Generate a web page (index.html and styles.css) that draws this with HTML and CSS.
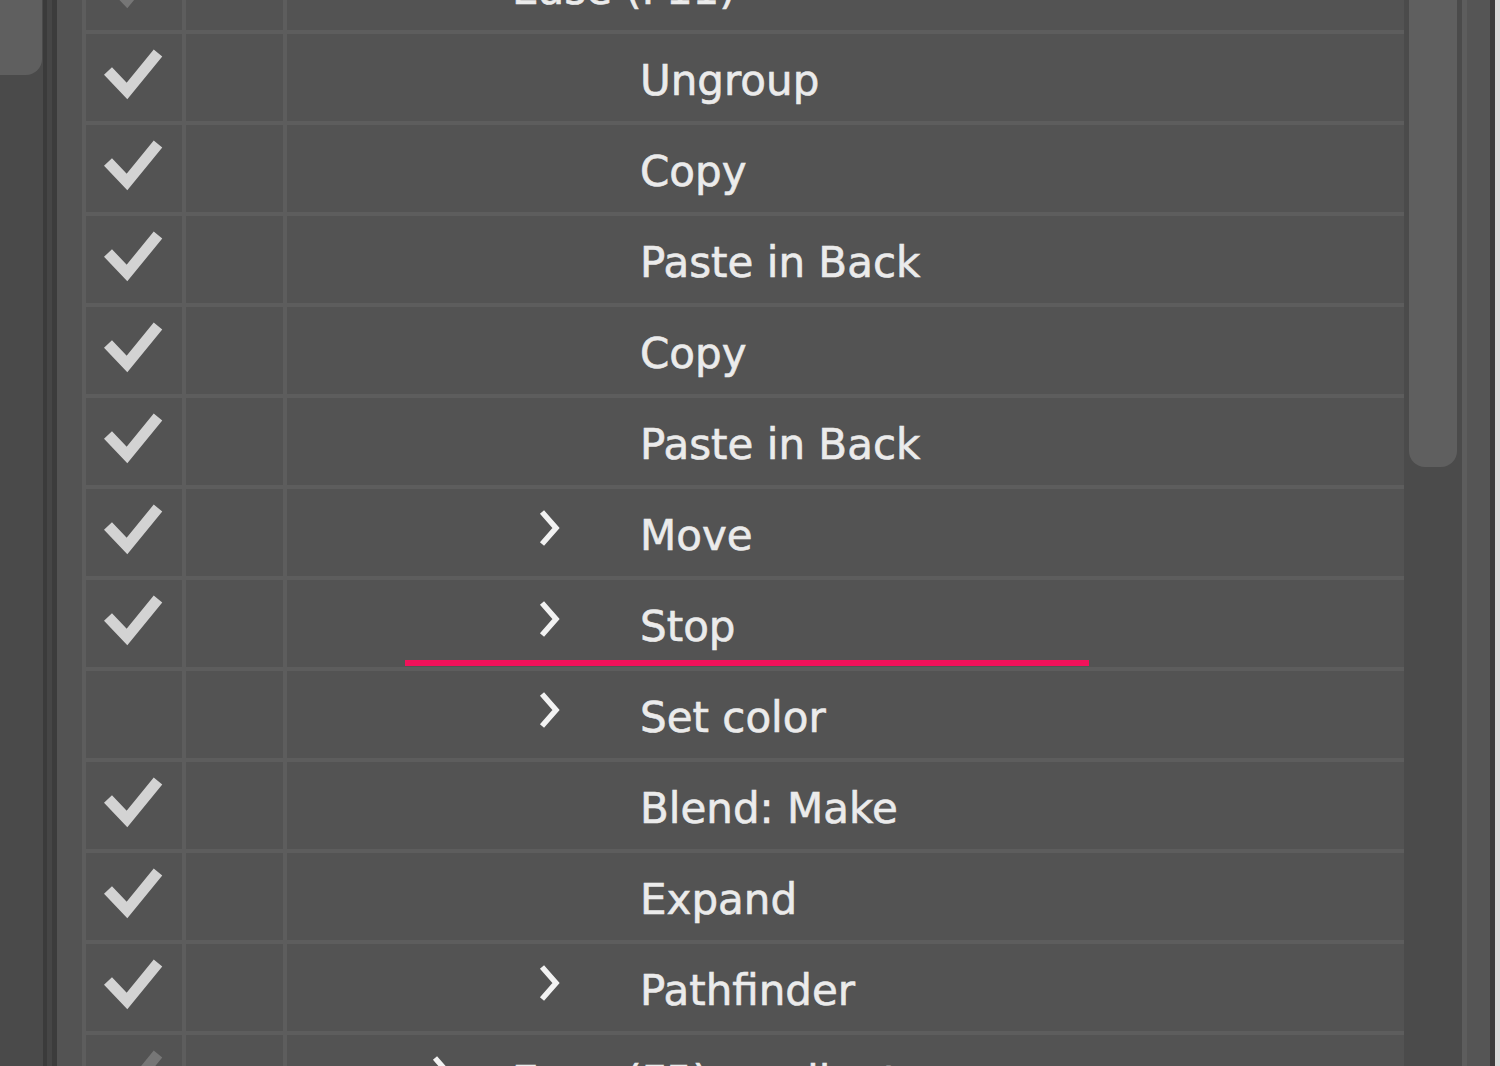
FILE: index.html
```html
<!DOCTYPE html>
<html>
<head>
<meta charset="utf-8">
<link rel="stylesheet" href="styles.css">
</head>
<body>
<div class="leftpane"><div class="leftthumb"></div></div>
<div class="divider"></div>
<div class="panel">
  <div class="list">
    <div class="rows">
      <div class="row">
        <div class="cell check dim"><svg class="ck" viewBox="0 0 96 87"><polyline points="22,37 41,57 72,19"/></svg></div>
        <div class="cell"></div>
        <div class="cell name lvl1"><span class="slot"><svg class="chev" viewBox="0 0 40 24"><polyline points="4,5 20,19 36,5"/></svg></span><span class="label">Ease (F11)</span></div>
      </div>
      <div class="row">
        <div class="cell check"><svg class="ck" viewBox="0 0 96 87"><polyline points="22,37 41,57 72,19"/></svg></div>
        <div class="cell"></div>
        <div class="cell name lvl2"><span class="slot"></span><span class="label">Ungroup</span></div>
      </div>
      <div class="row">
        <div class="cell check"><svg class="ck" viewBox="0 0 96 87"><polyline points="22,37 41,57 72,19"/></svg></div>
        <div class="cell"></div>
        <div class="cell name lvl2"><span class="slot"></span><span class="label">Copy</span></div>
      </div>
      <div class="row">
        <div class="cell check"><svg class="ck" viewBox="0 0 96 87"><polyline points="22,37 41,57 72,19"/></svg></div>
        <div class="cell"></div>
        <div class="cell name lvl2"><span class="slot"></span><span class="label">Paste in Back</span></div>
      </div>
      <div class="row">
        <div class="cell check"><svg class="ck" viewBox="0 0 96 87"><polyline points="22,37 41,57 72,19"/></svg></div>
        <div class="cell"></div>
        <div class="cell name lvl2"><span class="slot"></span><span class="label">Copy</span></div>
      </div>
      <div class="row">
        <div class="cell check"><svg class="ck" viewBox="0 0 96 87"><polyline points="22,37 41,57 72,19"/></svg></div>
        <div class="cell"></div>
        <div class="cell name lvl2"><span class="slot"></span><span class="label">Paste in Back</span></div>
      </div>
      <div class="row">
        <div class="cell check"><svg class="ck" viewBox="0 0 96 87"><polyline points="22,37 41,57 72,19"/></svg></div>
        <div class="cell"></div>
        <div class="cell name lvl2"><span class="slot"><svg class="chev" viewBox="0 0 24 40"><polyline points="5,4 19,20 5,36"/></svg></span><span class="label">Move</span></div>
      </div>
      <div class="row">
        <div class="cell check"><svg class="ck" viewBox="0 0 96 87"><polyline points="22,37 41,57 72,19"/></svg></div>
        <div class="cell"></div>
        <div class="cell name lvl2"><span class="slot"><svg class="chev" viewBox="0 0 24 40"><polyline points="5,4 19,20 5,36"/></svg></span><span class="label">Stop</span><span class="drop"></span></div>
      </div>
      <div class="row">
        <div class="cell check"></div>
        <div class="cell"></div>
        <div class="cell name lvl2"><span class="slot"><svg class="chev" viewBox="0 0 24 40"><polyline points="5,4 19,20 5,36"/></svg></span><span class="label">Set color</span></div>
      </div>
      <div class="row">
        <div class="cell check"><svg class="ck" viewBox="0 0 96 87"><polyline points="22,37 41,57 72,19"/></svg></div>
        <div class="cell"></div>
        <div class="cell name lvl2"><span class="slot"></span><span class="label">Blend: Make</span></div>
      </div>
      <div class="row">
        <div class="cell check"><svg class="ck" viewBox="0 0 96 87"><polyline points="22,37 41,57 72,19"/></svg></div>
        <div class="cell"></div>
        <div class="cell name lvl2"><span class="slot"></span><span class="label">Expand</span></div>
      </div>
      <div class="row">
        <div class="cell check"><svg class="ck" viewBox="0 0 96 87"><polyline points="22,37 41,57 72,19"/></svg></div>
        <div class="cell"></div>
        <div class="cell name lvl2"><span class="slot"><svg class="chev" viewBox="0 0 24 40"><polyline points="5,4 19,20 5,36"/></svg></span><span class="label">Pathfinder</span></div>
      </div>
      <div class="row">
        <div class="cell check dim"><svg class="ck" viewBox="0 0 96 87"><polyline points="22,37 41,57 72,19"/></svg></div>
        <div class="cell"></div>
        <div class="cell name lvl1"><span class="slot"><svg class="chev" viewBox="0 0 24 40"><polyline points="5,4 19,20 5,36"/></svg></span><span class="label">Ease (F5) gradient</span></div>
      </div>
    </div>
  </div>
  <div class="scroll"><div class="thumb"></div></div>
  <div class="frame"></div>
  <div class="edge"></div>
</div>
</body>
</html>
```

FILE: styles.css
```css
html, body {
  margin: 0;
  padding: 0;
}
body {
  width: 1500px;
  height: 1066px;
  overflow: hidden;
  background: #535353;
  display: flex;
  font-family: "DejaVu Sans", "Liberation Sans", sans-serif;
}
.leftpane {
  width: 43px;
  flex: none;
  background: #4a4a4a;
}
.leftthumb {
  width: 42px;
  height: 75px;
  background: #5f5f5f;
  border-bottom-right-radius: 16px;
}
.divider {
  width: 14px;
  flex: none;
  background: linear-gradient(to right, #3b3b3b 0 4px, #464646 4px 9px, #3c3c3c 9px 14px);
}
.panel {
  flex: 1;
  display: flex;
  padding-left: 25px;
  background: #535353;
}
.list {
  width: 1318px;
  flex: none;
  border-left: 4px solid #5d5d5d;
  overflow: hidden;
}
.rows {
  margin-top: -61px;
}
.row {
  height: 87px;
  border-top: 4px solid #5d5d5d;
  display: grid;
  grid-template-columns: 96px 97px 1fr;
  column-gap: 4px;
  background: #5d5d5d;
}
.cell {
  background: #535353;
  position: relative;
}
.ck {
  display: block;
  width: 96px;
  height: 87px;
}
.ck polyline {
  fill: none;
  stroke: #d3d3d3;
  stroke-width: 11;
  stroke-linejoin: miter;
}
.dim .ck polyline {
  stroke: #767676;
}
.name {
  display: flex;
  align-items: flex-start;
}
.name.lvl1 {
  padding-left: 143px;
}
.name.lvl2 {
  padding-left: 250px;
}
.slot {
  flex: none;
  height: 87px;
}
.lvl1 .slot {
  width: 82px;
}
.lvl2 .slot {
  width: 103px;
}
.chev {
  display: block;
  margin-top: 19px;
  width: 24px;
  height: 40px;
}
.lvl1 .slot .chev[viewBox="0 0 40 24"] {
  width: 40px;
  height: 24px;
  margin-top: 30px;
}
.chev polyline {
  fill: none;
  stroke: #f2f2f2;
  stroke-width: 5.5;
}
.label {
  margin-top: 22px;
  font-size: 42px;
  line-height: 49px;
  color: #ebebeb;
  -webkit-text-stroke: 0.6px #ebebeb;
  white-space: nowrap;
}
.drop {
  position: absolute;
  left: 118px;
  bottom: 1px;
  width: 684px;
  height: 6px;
  background: #f2125a;
}
.scroll {
  width: 58px;
  flex: none;
  background: #4b4b4b;
  padding: 0 5px 0 5px;
  box-sizing: border-box;
}
.thumb {
  height: 467px;
  background: #5f5f5f;
  border-radius: 0 0 16px 16px;
}
.frame {
  width: 23px;
  flex: none;
  background: #555555;
  border-left: 5px solid #5d5d5d;
  border-right: 5px solid #3c3c3c;
}
.edge {
  flex: 1;
  background: #d9d9d9;
}
```
